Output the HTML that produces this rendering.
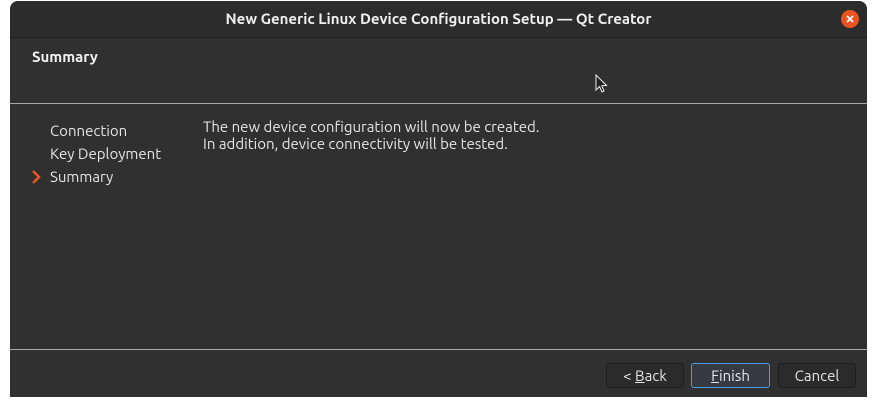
<!DOCTYPE html>
<html><head><style>
body{margin:0;width:878px;height:408px;background:#fff;position:relative;overflow:hidden;font-family:"Ubuntu","Liberation Sans","DejaVu Sans",sans-serif;}
.win{position:absolute;left:10px;top:1px;width:857px;height:396px;background:#303030;border-radius:8px 8px 0 0;overflow:hidden;}
.title{position:absolute;left:0;top:0;width:100%;height:36px;background:#2c2c2c;border-bottom:1px solid #1c1c1c;color:#f0f0f0;font-weight:bold;font-size:15px;text-align:center;line-height:36px;}
.close{position:absolute;left:831px;top:9px;width:18px;height:18px;border-radius:50%;background:#e95420;}
.hdr{position:absolute;left:22px;top:47px;color:#f2f2f2;font-weight:bold;font-size:15px;}
.l1{position:absolute;left:0;top:102px;width:100%;height:1px;background:#a8a8a8;}
.l2{position:absolute;left:0;top:348px;width:100%;height:1px;background:#a8a8a8;}
.t{position:absolute;color:#e6e6e6;font-size:15px;}
.btn{position:absolute;top:362px;height:23px;border:1px solid #1e1e1e;border-radius:3px;background:#2b2b2b;color:#e6e6e6;font-size:15px;text-align:center;line-height:23px;}
</style></head><body>
<div class="win">
<div class="title">New Generic Linux Device Configuration Setup — Qt Creator</div>
<div class="close"><svg width="18" height="18"><path d="M6 6L12 12M12 6L6 12" stroke="#fff" stroke-width="1.8"/></svg></div>
<div class="hdr">Summary</div>
<div class="l1"></div>
<div class="t" style="left:40px;top:121px">Connection</div>
<div class="t" style="left:40px;top:144px">Key Deployment</div>
<div class="t" style="left:40px;top:167px">Summary</div>
<svg style="position:absolute;left:21px;top:168px" width="10" height="16"><path d="M2 2L8 8L2 14" stroke="#e95420" stroke-width="2.5" fill="none"/></svg>
<div class="t" style="left:193px;top:117px">The new device configuration will now be created.</div>
<div class="t" style="left:193px;top:134px">In addition, device connectivity will be tested.</div>
<svg style="position:absolute;left:585px;top:73px" width="14" height="20"><path d="M1 1L1 16L4.5 12.5L7 18L9 17L6.8 11.8L11.5 11.5Z" fill="#222" stroke="#eee" stroke-width="1"/></svg>
<div class="l2"></div>
<div class="btn" style="left:596px;width:76px">&lt; <u>B</u>ack</div>
<div class="btn" style="left:681px;width:77px;border-color:#4a9be8;background:#363a40"><u>F</u>inish</div>
<div class="btn" style="left:768px;width:76px">Cancel</div>
</div>
</body></html>
